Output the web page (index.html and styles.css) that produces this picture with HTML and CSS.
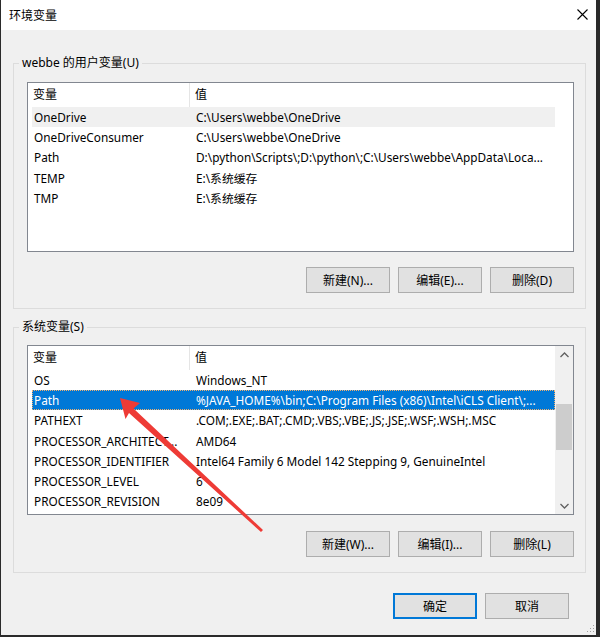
FILE: index.html
```html
<!DOCTYPE html>
<html>
<head>
<meta charset="utf-8">
<link rel="stylesheet" href="styles.css">
</head>
<body>
<div class="page">
  <div class="window">
    <div class="titlebar">
      <span class="title">环境变量</span>
      <svg class="close" width="11" height="11" viewBox="0 0 11 11"><path d="M0.5 0.5 L10.5 10.5 M10.5 0.5 L0.5 10.5" stroke="#000" stroke-width="1.1" fill="none"/></svg>
    </div>
    <div class="content">
      <div class="group">
        <div class="legend">webbe 的用户变量(U)</div>
        <div class="listview">
          <div class="lv-main">
            <div class="lv-header"><div class="hcell c1">变量</div><div class="hcell c2">值</div></div>
            <div class="row hover"><div class="c1">OneDrive</div><div class="c2">C:\Users\webbe\OneDrive</div></div>
            <div class="row"><div class="c1">OneDriveConsumer</div><div class="c2">C:\Users\webbe\OneDrive</div></div>
            <div class="row"><div class="c1">Path</div><div class="c2">D:\python\Scripts\;D:\python\;C:\Users\webbe\AppData\Loca...</div></div>
            <div class="row"><div class="c1">TEMP</div><div class="c2">E:\系统缓存</div></div>
            <div class="row"><div class="c1">TMP</div><div class="c2">E:\系统缓存</div></div>
          </div>
        </div>
        <div class="btnrow">
          <button class="btn">新建(N)...</button>
          <button class="btn">编辑(E)...</button>
          <button class="btn">删除(D)</button>
        </div>
      </div>
      <div class="group group2">
        <div class="legend">系统变量(S)</div>
        <div class="listview">
          <div class="lv-main">
            <div class="lv-header"><div class="hcell c1">变量</div><div class="hcell c2">值</div></div>
            <div class="row"><div class="c1">OS</div><div class="c2">Windows_NT</div></div>
            <div class="row selected"><div class="c1">Path</div><div class="c2">%JAVA_HOME%\bin;C:\Program Files (x86)\Intel\iCLS Client\;...</div></div>
            <div class="row"><div class="c1">PATHEXT</div><div class="c2">.COM;.EXE;.BAT;.CMD;.VBS;.VBE;.JS;.JSE;.WSF;.WSH;.MSC</div></div>
            <div class="row"><div class="c1">PROCESSOR_ARCHITECT...</div><div class="c2">AMD64</div></div>
            <div class="row"><div class="c1">PROCESSOR_IDENTIFIER</div><div class="c2">Intel64 Family 6 Model 142 Stepping 9, GenuineIntel</div></div>
            <div class="row"><div class="c1">PROCESSOR_LEVEL</div><div class="c2">6</div></div>
            <div class="row"><div class="c1">PROCESSOR_REVISION</div><div class="c2">8e09</div></div>
          </div>
          <div class="scrollbar">
            <div class="sb-btn"><svg width="9" height="6" viewBox="0 0 9 6"><path d="M0.5 5 L4.5 1 L8.5 5" stroke="#606060" stroke-width="1.3" fill="none"/></svg></div>
            <div class="sb-track"><div class="sb-thumb"></div></div>
            <div class="sb-btn"><svg width="9" height="6" viewBox="0 0 9 6"><path d="M0.5 1 L4.5 5 L8.5 1" stroke="#606060" stroke-width="1.3" fill="none"/></svg></div>
          </div>
        </div>
        <div class="btnrow">
          <button class="btn">新建(W)...</button>
          <button class="btn">编辑(I)...</button>
          <button class="btn">删除(L)</button>
        </div>
      </div>
      <div class="footer">
        <button class="btn default">确定</button>
        <button class="btn">取消</button>
      </div>
    </div>
    <svg class="grip" width="10" height="10" viewBox="0 0 10 10">
      <rect x="8" y="2" width="1" height="1" fill="#a0a0a0"/>
      <rect x="5" y="5" width="1" height="1" fill="#a0a0a0"/>
      <rect x="8" y="5" width="1" height="1" fill="#a0a0a0"/>
      <rect x="2" y="8" width="1" height="1" fill="#a0a0a0"/>
      <rect x="5" y="8" width="1" height="1" fill="#a0a0a0"/>
      <rect x="8" y="8" width="1" height="1" fill="#a0a0a0"/>
    </svg>
  </div>
  <svg class="arrow" width="600" height="637" viewBox="0 0 600 637">
    <polygon points="120,398 140,403 133.5,408.5 263,530 261,532 129,413 125.5,419" fill="#ee3b36"/>
  </svg>
</div>
</body>
</html>
```

FILE: styles.css
```css
html, body {
  margin: 0;
  padding: 0;
  background: #2a2a2a;
}
.page {
  position: relative;
  width: 600px;
  height: 637px;
  overflow: hidden;
}
.window {
  position: relative;
  margin-left: 1px;
  width: 595px;
  height: 635px;
  background: #f0f0f0;
  font-family: "Noto Sans", "Noto Sans CJK SC", sans-serif;
  font-size: 12px;
  color: #000;
}
.titlebar {
  height: 30px;
  background: #fff;
  display: flex;
  align-items: center;
  justify-content: space-between;
  padding: 0 8px 0 8px;
  box-sizing: border-box;
}
.title {
  font-size: 12px;
  line-height: 16px;
  font-family: "Noto Sans CJK SC", sans-serif;
}
.close {
  display: block;
  margin-top: -2px;
}
.content {
  padding: 33px 10px 0 12px;
}
.group {
  border: 1px solid #dcdcdc;
  padding: 0 11px 15px 13px;
}
.group2 {
  margin-top: 18px;
}
.legend {
  display: block;
  width: fit-content;
  margin-top: -9px;
  margin-left: -8px;
  padding: 0 3px;
  background: #f0f0f0;
  height: 16px;
  line-height: 16px;
}
.listview {
  margin-top: 11px;
  height: 170px;
  box-sizing: border-box;
  border: 1px solid #828790;
  background: #fff;
  display: flex;
}
.group2 .listview {
  margin-top: 10px;
}
.lv-main {
  width: 527px;
  flex: none;
}
.lv-header {
  display: flex;
  height: 24px;
}
.hcell {
  line-height: 24px;
  padding-left: 5px;
  box-sizing: border-box;
}
.hcell.c1 {
  width: 162px;
  border-right: 1px solid #e5e5e5;
}
.row {
  display: flex;
  height: 20.2px;
  line-height: 20px;
  margin-left: 4px;
  white-space: nowrap;
  font-size: 11.8px;
}
.row .c1 {
  width: 158px;
  padding-left: 2px;
  flex: none;
  box-sizing: border-box;
  width: 158px;
}
.row .c2 {
  padding-left: 6px;
  overflow: hidden;
  flex: 1;
}
.row.hover {
  background: #f0f0f0;
}
.row.selected {
  background: #0078d7;
  color: #fff;
  outline: 1px dotted #f0b070;
  outline-offset: -1px;
}
.scrollbar {
  flex: 1;
  background: #f0f0f0;
  display: flex;
  flex-direction: column;
}
.sb-btn {
  height: 17px;
  display: flex;
  align-items: center;
  justify-content: center;
}
.sb-track {
  flex: 1;
  padding: 0 1px;
}
.sb-thumb {
  margin-top: 41px;
  height: 46px;
  background: #cdcdcd;
}
.btnrow {
  display: flex;
  justify-content: flex-end;
  gap: 8px;
  margin-top: 15px;
}
.group2 .btnrow {
  margin-top: 16px;
}
.btn {
  width: 84px;
  height: 26px;
  box-sizing: border-box;
  background: #e1e1e1;
  border: 1px solid #adadad;
  font-family: "Noto Sans", "Noto Sans CJK SC", sans-serif;
  font-size: 12px;
  color: #000;
  padding: 0;
  margin: 0;
}
.btn.default {
  border: 1px solid #0078d7;
  box-shadow: inset 0 0 0 1px #0078d7;
}
.footer {
  display: flex;
  justify-content: flex-end;
  gap: 8px;
  margin-top: 20px;
  margin-right: 17px;
}
.grip {
  position: absolute;
  right: 1px;
  bottom: 2px;
}
.arrow {
  position: absolute;
  left: 0;
  top: 0;
  pointer-events: none;
}
```
